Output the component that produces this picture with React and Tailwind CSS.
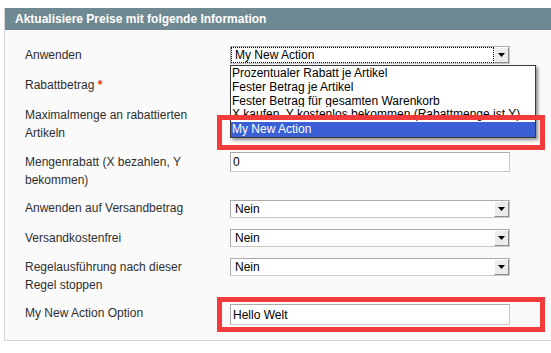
const FONT = { fontFamily: '"Liberation Sans", Arial, Helvetica, sans-serif' }

const OPTIONS = [
  'Prozentualer Rabatt je Artikel',
  'Fester Betrag je Artikel',
  'Fester Betrag für gesamten Warenkorb',
  'X kaufen, Y kostenlos bekommen (Rabattmenge ist Y)',
]

function Select({ value, focused }) {
  return (
    <div className="flex h-[18px] w-[280px] border border-[#aaa] border-r-[#c8c8c8] border-b-[#c8c8c8] bg-white text-[12px] text-black">
      <span className={`flex-1 pl-[3px] leading-[14px] border ${focused ? 'border-dotted border-black' : 'border-transparent'}`}>{value}</span>
      <span className="flex h-[16px] w-[15px] items-center justify-center bg-[#ececec] border border-l-white border-t-white border-r-[#8e8e8e] border-b-[#8e8e8e]">
        <svg width="7" height="4" viewBox="0 0 7 4"><polygon points="0,0 7,0 3.5,4" fill="#000" /></svg>
      </span>
    </div>
  )
}

function Input({ value = '', h = 'h-[20px]' }) {
  return (
    <div className={`${h} w-[280px] border border-[#aaa] border-r-[#c8c8c8] border-b-[#c8c8c8] bg-white pl-[2px] flex items-center text-[12px] text-black`}>
      {value}
    </div>
  )
}

function Row({ h, label, children, control }) {
  return (
    <div className={`flex items-start ${h}`}>
      <div className="w-[205px] pr-[20px] text-[12px] leading-[18px] text-[#2f2f2f]">{label}</div>
      <div className="relative">{control}{children}</div>
    </div>
  )
}

// red annotation frame drawn over the form
function RedBox({ top }) {
  return <div className={`absolute z-20 left-[-13px] ${top} w-[328px] h-[35px] border-[5px] border-[#f23b3b]`} />
}

export default function App() {
  return (
    <div className="w-[551px] h-[353px] bg-white overflow-hidden pt-[8px] pl-[4px]" style={FONT}>
      <div className="w-[560px] border-l border-b border-[#d6d6d6] bg-[#fafafa]">
        <div className="h-[22px] bg-[#6f8992] pl-[10px] text-[12px] font-bold leading-[22px] text-white">
          Aktualisiere Preise mit folgende Information
        </div>
        <div className="flex flex-col pl-[20px] pt-[16px] pb-[6px]">
          <Row h="h-[30px]" label="Anwenden" control={<Select value="My New Action" focused />}>
            <div className="absolute left-0 top-[19px] z-10 flex w-[306px] h-[73px] flex-col border border-[#3a3a3a] bg-white shadow-[2px_2px_3px_rgba(0,0,0,0.45)] text-[12px] text-black">
              {OPTIONS.map((o, i) => (
                <div key={o} className={`${i === 3 ? 'h-[15px]' : 'h-[14px]'} pl-[1px] leading-[14px] whitespace-nowrap overflow-hidden`}>{o}</div>
              ))}
              <div className="h-[15px] pl-[1px] leading-[15px] bg-[#3a5fd6] text-white">My New Action</div>
            </div>
            <RedBox top="top-[69px]" />
          </Row>
          <Row h="h-[30px]" label={<>Rabattbetrag <span className="font-bold text-[#eb340a]">*</span></>} control={<div className="-mt-px"><Input /></div>} />
          <Row h="h-[47px]" label={<>Maximalmenge an rabattierten<br />Artikeln</>} control={<div className="-mt-px"><Input /></div>} />
          <Row h="h-[46px]" label={<>Mengenrabatt (X bezahlen, Y<br />bekommen)</>} control={<div className="-mt-px"><Input value="0" /></div>} />
          <Row h="h-[30px]" label="Anwenden auf Versandbetrag" control={<div className="mt-px"><Select value="Nein" /></div>} />
          <Row h="h-[29px]" label="Versandkostenfrei" control={<Select value="Nein" />} />
          <Row h="h-[46px]" label={<>Regelausführung nach dieser<br />Regel stoppen</>} control={<Select value="Nein" />} />
          <Row h="h-[30px]" label="My New Action Option" control={<Input value="Hello Welt" h="h-[21px]" />}>
            <RedBox top="top-[-7px]" />
          </Row>
        </div>
      </div>
    </div>
  )
}
